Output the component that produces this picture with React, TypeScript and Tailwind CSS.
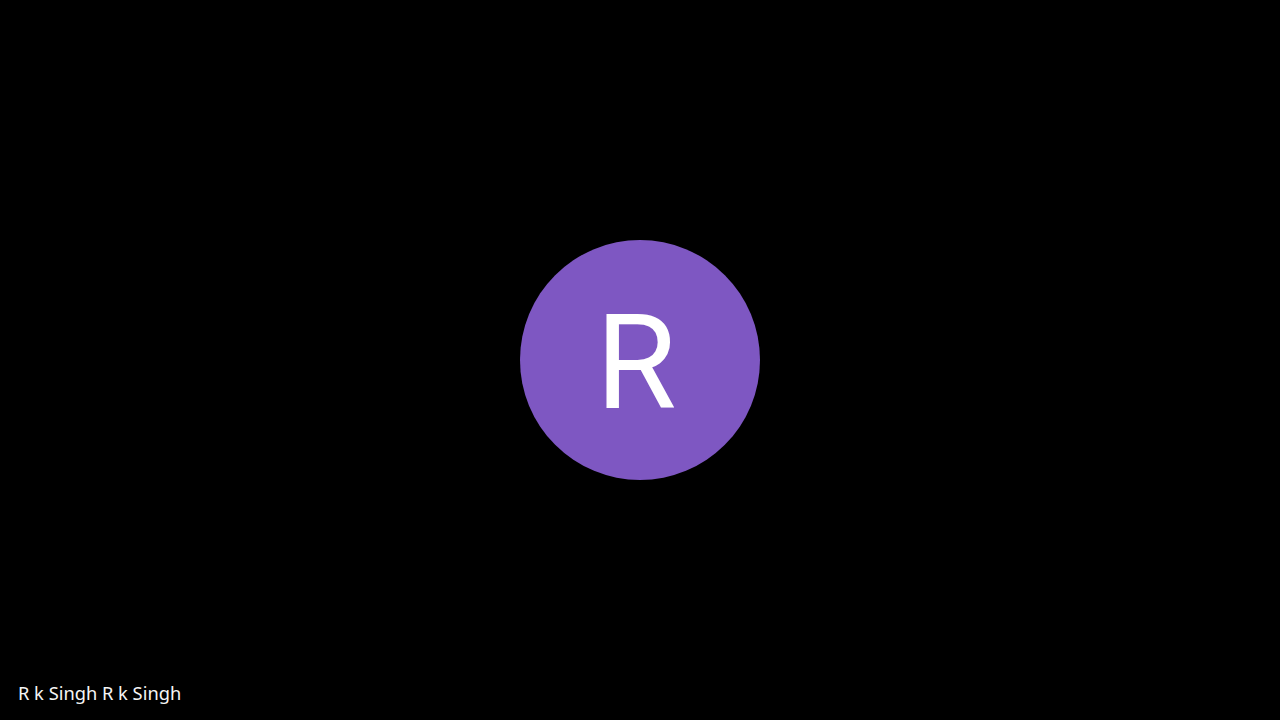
import React from 'react';

const App: React.FC = () => {
  return (
    <main className="relative flex h-screen w-full items-center justify-center overflow-hidden bg-black">
      {/* Avatar */}
      <div className="flex h-[240px] w-[240px] items-center justify-center rounded-full bg-[#7e57c2] pt-[6px] pr-[8px]">
        <span className="text-[131px] leading-none text-white font-['Roboto',sans-serif]">R</span>
      </div>

      {/* Name label */}
      <div className="absolute bottom-[15px] left-[18px] text-[18.3px] leading-[24px] text-[#f5f5f5] font-['Noto_Sans',sans-serif]">
        R k Singh R k Singh
      </div>
    </main>
  );
};

export default App;
